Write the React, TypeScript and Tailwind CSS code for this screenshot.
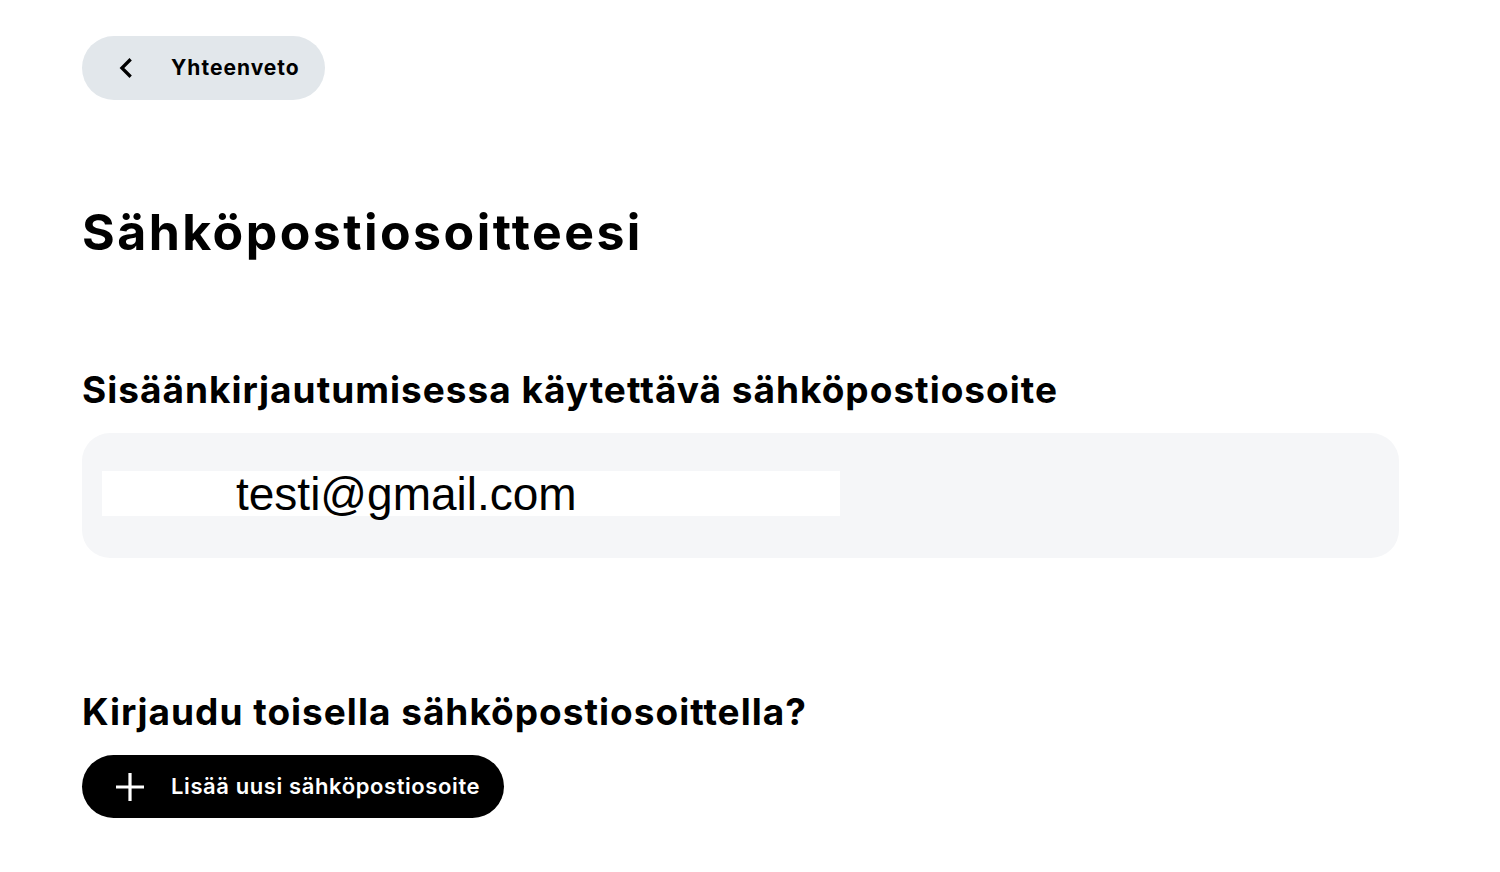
import React from 'react';

const ChevronLeft = () => (
  <svg width="28" height="28" viewBox="0 0 24 24" fill="none">
    <path d="M16 4.5l-7.5 7.5 7.5 7.5" stroke="#000" strokeWidth="2.8" />
  </svg>
);

const Plus = () => (
  <svg width="30" height="30" viewBox="0 0 30 30" fill="none">
    <path d="M15 1v28M1 15h28" stroke="#fff" strokeWidth="3.2" />
  </svg>
);

const App = () => {
  return (
    <div className="min-h-screen bg-white font-['Inter',sans-serif] text-black px-[82px] pt-[36px]">
      <button className="flex items-center h-[64px] w-[243px] rounded-full bg-[#e2e7eb] pl-[30px]">
        <ChevronLeft />
        <span className="ml-[31px] text-[21px] font-bold tracking-[1px]">Yhteenveto</span>
      </button>

      <h1 className="mt-[100px] text-[50px] leading-[64px] font-bold tracking-[2.45px]">Sähköpostiosoitteesi</h1>

      <h2 className="mt-[103px] text-[37px] leading-[46px] font-bold tracking-[1px]">
        Sisäänkirjautumisessa käytettävä sähköpostiosoite
      </h2>

      <div className="mt-[20px] w-[1317px] h-[125px] rounded-[28px] bg-[#f5f6f8] pt-[38px] px-[20px]">
        <div className="w-[738px] h-[45px] bg-white flex items-center pl-[134px]">
          <span className="font-['Liberation_Sans',Arial,sans-serif] text-[46px] leading-none mt-[1px]">testi@gmail.com</span>
        </div>
      </div>

      <h2 className="mt-[131px] text-[37px] leading-[46px] font-bold tracking-[1px]">
        Kirjaudu toisella sähköpostiosoittella?
      </h2>

      <button className="mt-[20px] flex items-center h-[63px] w-[422px] rounded-full bg-black pl-[33px]">
        <Plus />
        <span className="ml-[26px] text-[22px] font-semibold text-white tracking-[0.6px]">Lisää uusi sähköpostiosoite</span>
      </button>
    </div>
  );
};

export default App;
